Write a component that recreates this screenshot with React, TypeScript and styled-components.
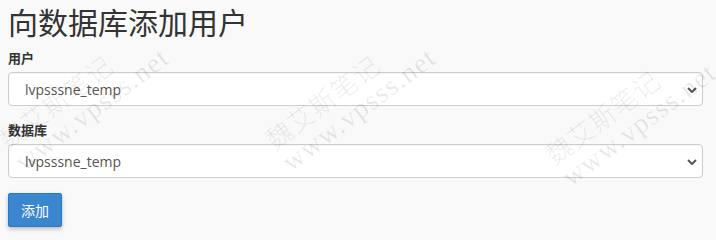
import React from 'react';
import styled, {createGlobalStyle} from "styled-components";

const GlobalStyle = createGlobalStyle`
  html, body {
    margin: 0;
    padding: 0;
    background-color: #f9f9f9;
  }
  body {
    font-family: "Open Sans", "Noto Sans CJK SC", sans-serif;
    font-size: 14px;
    color: #333;
  }
  * {
    box-sizing: border-box;
  }
`

const Page = styled.main`
  position: relative;
  min-height: 240px;
  overflow: hidden;
  padding: 0 13px 0 8px;
`
const Title = styled.h1`
  margin: 6px 0 10px;
  font-size: 30px;
  line-height: 33px;
  font-weight: 400;
  color: #333;
`
const FormGroup = styled.div`
  display: flex;
  flex-direction: column;
  margin-bottom: 15px;
`
const Label = styled.label`
  font-size: 13px;
  line-height: 18px;
  font-weight: 700;
  margin-bottom: 5px;
  color: #333;
`
const SelectWrap = styled.div`
  position: relative;
`
const Select = styled.select`
  appearance: none;
  width: 100%;
  height: 34px;
  padding: 6px 16px;
  font-family: "Open Sans", sans-serif;
  font-size: 14px;
  color: #555;
  background-color: #fff;
  border: 1px solid #ccc;
  border-radius: 4px;
  box-shadow: inset 0 1px 1px rgba(0, 0, 0, 0.04);
`
const Chevron = styled.svg`
  position: absolute;
  right: 6px;
  top: 15px;
  width: 10px;
  height: 6px;
  pointer-events: none;
`
const Button = styled.button`
  height: 34px;
  padding: 0 12px;
  font-family: "Open Sans", "Noto Sans CJK SC", sans-serif;
  font-size: 14px;
  color: #fff;
  background-color: #3a87cf;
  border: 1px solid #2f78bd;
  border-radius: 2px;
  box-shadow: 0 2px 4px rgba(0, 0, 0, 0.25);
  cursor: pointer;
`
// faint rotated watermark laid over the form
const Watermark = styled.div<{ $x: number; $y: number }>`
  position: absolute;
  left: ${p => p.$x}px;
  top: ${p => p.$y}px;
  transform-origin: 0 0;
  transform: rotate(-37deg);
  pointer-events: none;
  white-space: nowrap;
  color: rgba(0, 0, 0, 0.09);
  line-height: 29px;
  z-index: 2;
`
const MarkCjk = styled.div`
  font-family: "Noto Sans CJK SC", sans-serif;
  font-weight: 300;
  font-size: 26px;
  letter-spacing: 1px;
`
const MarkUrl = styled.div`
  font-family: "Liberation Serif", serif;
  font-size: 28px;
  letter-spacing: 1.3px;
`

const marks = [
    {x: -8, y: 130},
    {x: 259, y: 130},
    {x: 539, y: 145},
]

const Field: React.FC<{label: string; value: string}> = ({label, value}) => (
    <FormGroup>
        <Label>{label}</Label>
        <SelectWrap>
            <Select defaultValue={value}>
                <option value={value}>{value}</option>
            </Select>
            <Chevron viewBox="0 0 10 6">
                <path d="M1 1l4 4 4-4" fill="none" stroke="#555" strokeWidth="2"/>
            </Chevron>
        </SelectWrap>
    </FormGroup>
)

const App: React.FC = () => {
    return (
        <Page>
            <GlobalStyle/>
            <Title>向数据库添加用户</Title>
            <Field label="用户" value="lvpsssne_temp"/>
            <Field label="数据库" value="lvpsssne_temp"/>
            <Button>添加</Button>
            {marks.map(m => (
                <Watermark key={m.x} $x={m.x} $y={m.y}>
                    <MarkCjk>魏艾斯笔记</MarkCjk>
                    <MarkUrl>www.vpsss.net</MarkUrl>
                </Watermark>
            ))}
        </Page>
    );
};
export default App;
